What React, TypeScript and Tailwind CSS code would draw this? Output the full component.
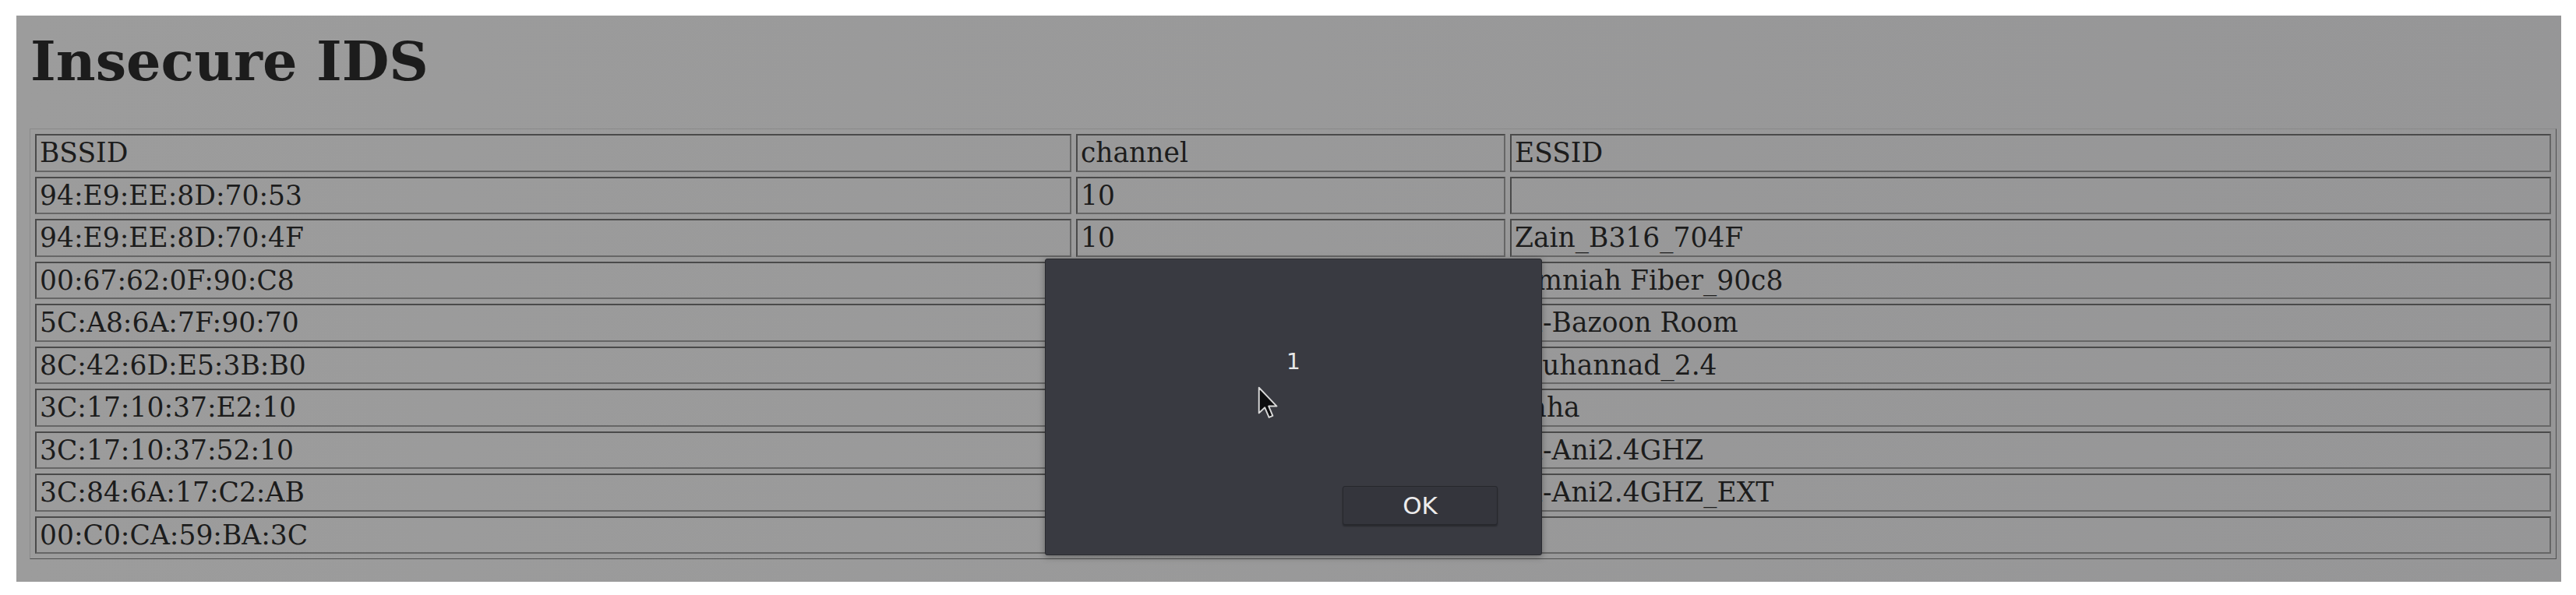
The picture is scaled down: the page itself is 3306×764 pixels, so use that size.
const rows: [string, string, string][] = [
  ["94:E9:EE:8D:70:53", "10", ""],
  ["94:E9:EE:8D:70:4F", "10", "Zain_B316_704F"],
  ["00:67:62:0F:90:C8", "", "Omniah Fiber_90c8"],
  ["5C:A8:6A:7F:90:70", "", "Al-Bazoon Room"],
  ["8C:42:6D:E5:3B:B0", "", "Muhannad_2.4"],
  ["3C:17:10:37:E2:10", "", "Taha"],
  ["3C:17:10:37:52:10", "", "Al-Ani2.4GHZ"],
  ["3C:84:6A:17:C2:AB", "", "Al-Ani2.4GHZ_EXT"],
  ["00:C0:CA:59:BA:3C", "", ""],
];

function Cell(props: { children?: React.ReactNode }) {
  return (
    <td className="border-2 border-t-[#4a4a4a] border-l-[#4a4a4a] border-b-[#666666] border-r-[#666666] px-[4px] py-[2px] text-left align-middle whitespace-nowrap overflow-hidden">
      {props.children}
    </td>
  );
}

function Cursor() {
  return (
    <svg width="28" height="43" viewBox="0 0 13 20" className="absolute left-[1614px] top-[496px]">
      <path
        d="M0.8 0.8 L0.8 16 L4.3 12.7 L6.8 18.6 L9 17.6 L6.6 11.9 L11.4 11.9 Z"
        fill="#0d0d0f"
        stroke="#d8d8d8"
        strokeWidth="0.9"
        strokeLinejoin="round"
      />
    </svg>
  );
}

export default function App() {
  return (
    <div className="relative w-[3306px] h-[764px] bg-white pt-[20px] pl-[21px] overflow-hidden">
      <div
        className="w-[3266px] h-[727px] bg-gradient-to-r from-[#9c9c9c] to-[#969697] pl-[17px] pt-[17px] text-[#1c1c1c]"
        style={{ fontFamily: '"DejaVu Serif", "Liberation Serif", serif' }}
      >
        <h1 className="text-[70px] leading-[84px] font-bold mb-[44px] pl-[1px]">Insecure IDS</h1>
        <table className="table-fixed border-separate border-spacing-x-[6px] border-spacing-y-[6px] border border-t-[#8a8a8a] border-l-[#8a8a8a] border-b-[#505050] border-r-[#505050] w-[3243px] text-[34.5px] leading-[40.5px]">
          <colgroup>
            <col className="w-[1330px]" />
            <col className="w-[551px]" />
            <col />
          </colgroup>
          <tbody>
            <tr>
              <Cell>BSSID</Cell>
              <Cell>channel</Cell>
              <Cell>ESSID</Cell>
            </tr>
            {rows.map((r) => (
              <tr key={r[0]}>
                <Cell>{r[0]}</Cell>
                <Cell>{r[1]}</Cell>
                <Cell>{r[2]}</Cell>
              </tr>
            ))}
          </tbody>
        </table>
      </div>

      <div
        className="absolute left-[1341px] top-[332px] w-[638px] h-[381px] bg-[#393a41] border border-[#2a2b30] rounded-[3px] shadow-[0_2px_8px_rgba(0,0,0,0.35)]"
        style={{ fontFamily: '"DejaVu Sans", "Noto Sans", sans-serif' }}
      >
        <div className="h-[291px] flex items-center justify-center pb-[27px]">
          <span className="text-[28px] leading-[32px] text-[#e8e8e8]">1</span>
        </div>
        <div className="flex justify-end pr-[56px]">
          <button className="w-[199px] h-[50px] bg-[#34353c] border border-[#26272c] rounded-[3px] shadow-[0_2px_2px_rgba(0,0,0,0.3)] text-[31px] leading-[36px] text-[#ececec]">
            OK
          </button>
        </div>
      </div>

      <Cursor />
    </div>
  );
}
